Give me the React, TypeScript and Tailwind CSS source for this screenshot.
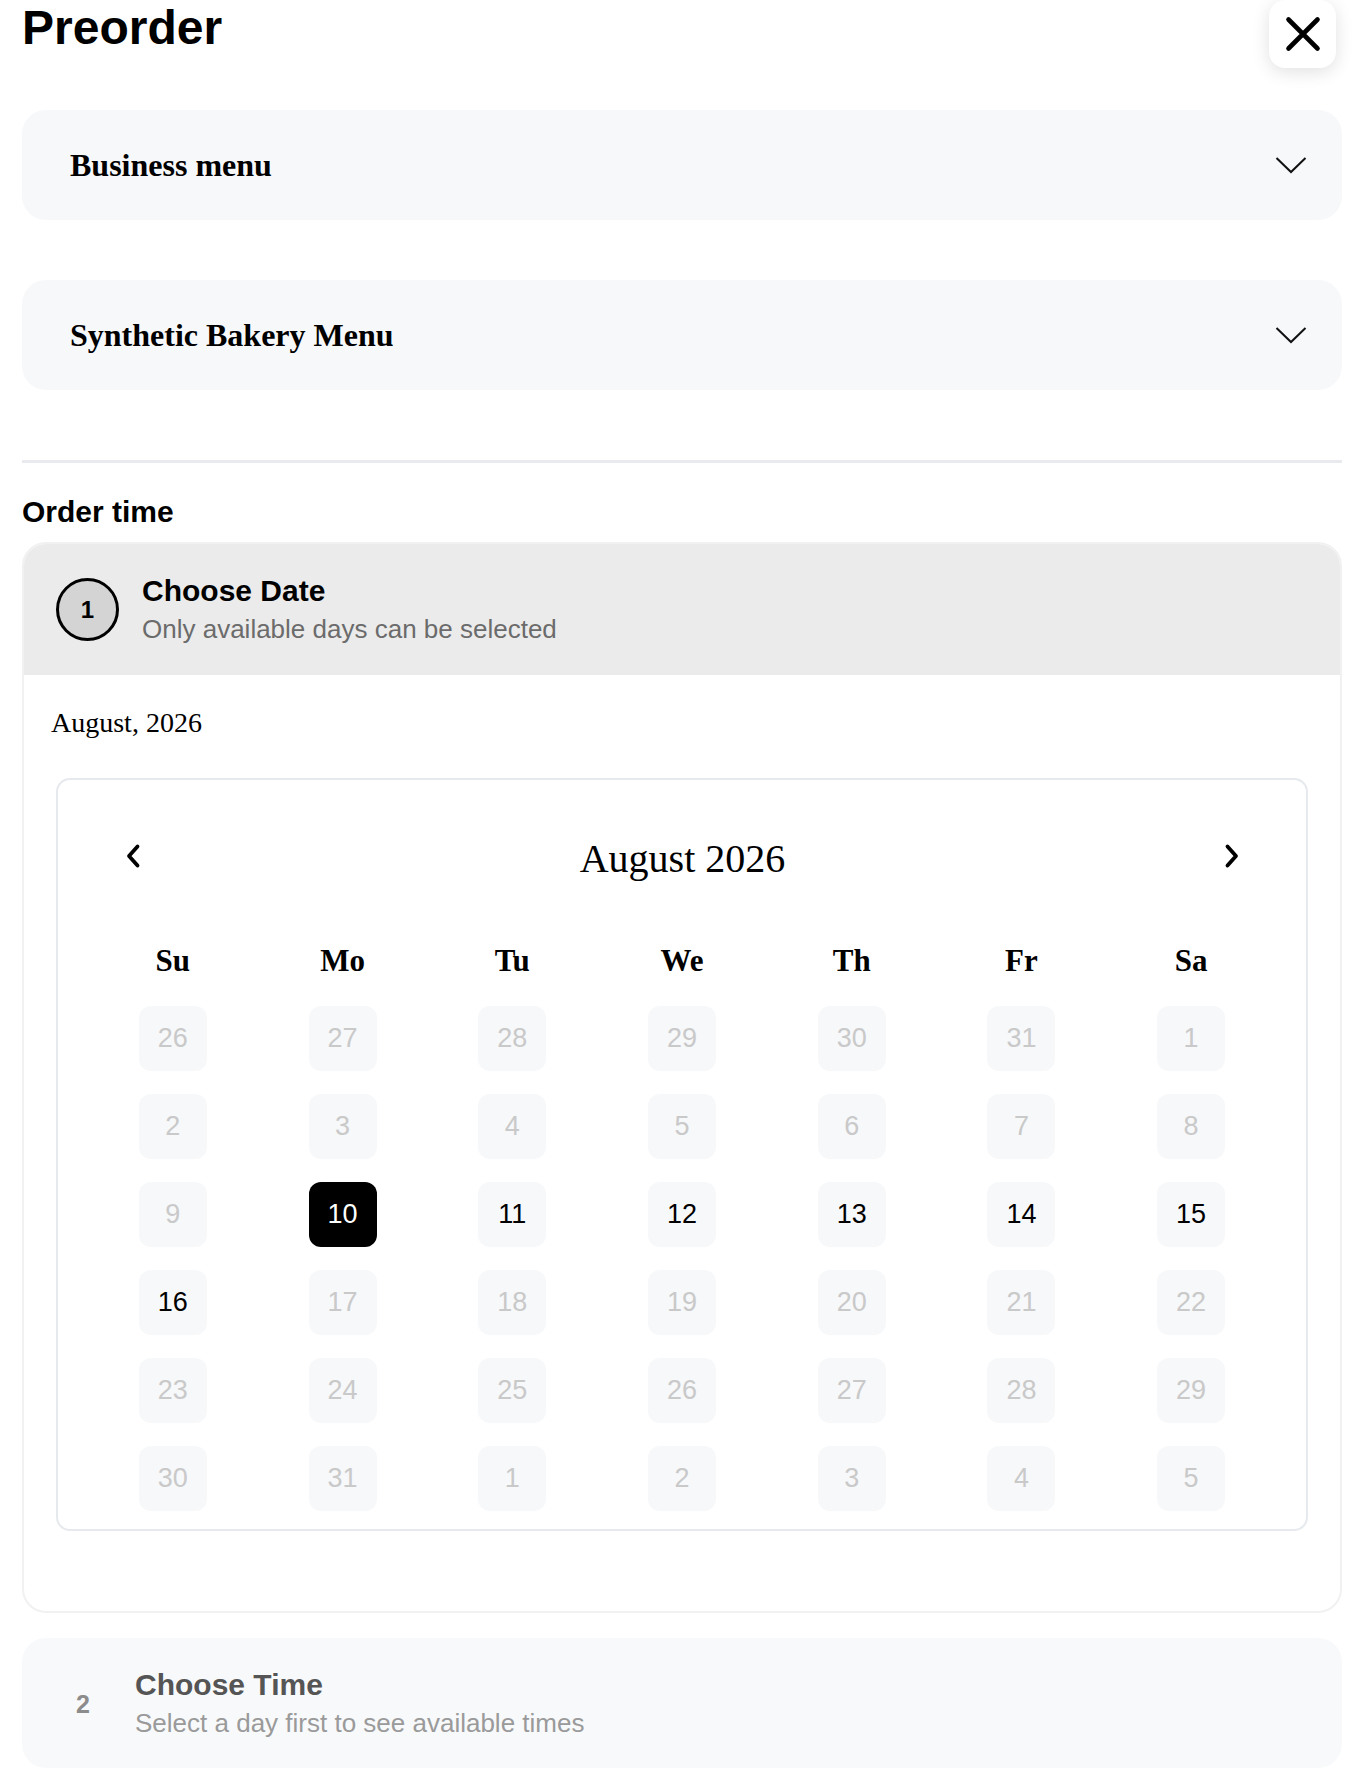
import React from "react";

const SANS = "font-['Liberation_Sans',Arial,sans-serif]";
const SERIF = "font-['Liberation_Serif','Times_New_Roman',serif]";

type Day = { n: number; state: "off" | "on" | "sel" };

const WEEKDAYS = ["Su", "Mo", "Tu", "We", "Th", "Fr", "Sa"];

function buildDays(): Day[] {
  const nums = [
    26, 27, 28, 29, 30, 31, 1,
    2, 3, 4, 5, 6, 7, 8,
    9, 10, 11, 12, 13, 14, 15,
    16, 17, 18, 19, 20, 21, 22,
    23, 24, 25, 26, 27, 28, 29,
    30, 31, 1, 2, 3, 4, 5,
  ];
  return nums.map((n, i) => {
    // 10th is picked, 11th..16th still open, the rest is closed
    if (i === 15) return { n, state: "sel" };
    if (i >= 16 && i <= 21) return { n, state: "on" };
    return { n, state: "off" };
  });
}

function Chevron() {
  return (
    <svg width="32" height="18" viewBox="0 0 32 18" fill="none">
      <path d="M1.5 2 L16 16 L30.5 2" stroke="#111" strokeWidth="2" strokeLinejoin="miter" />
    </svg>
  );
}

function MenuRow({ label }: { label: string }) {
  return (
    <div className="flex h-[110px] items-center justify-between rounded-[24px] bg-[#f7f8fa] pl-12 pr-[35px]">
      <span className={`${SERIF} text-[32px] font-bold text-black`}>{label}</span>
      <Chevron />
    </div>
  );
}

function NavArrow({ dir }: { dir: "left" | "right" }) {
  return (
    <svg width="24" height="26" viewBox="0 0 24 26" fill="none">
      {dir === "left" ? (
        <path d="M16.5 3.5 L8 13 L16.5 22.5" stroke="#000" strokeWidth="3.8" strokeLinecap="round" strokeLinejoin="round" />
      ) : (
        <path d="M7.5 3.5 L16 13 L7.5 22.5" stroke="#000" strokeWidth="3.8" strokeLinecap="round" strokeLinejoin="round" />
      )}
    </svg>
  );
}

function Calendar() {
  const days = buildDays();
  return (
    <div className="ml-[32px] mr-[32px] rounded-[14px] border-2 border-[#e6e9ed] px-[30px] pb-[18px] pt-[46px]">
      <div className="flex h-[60px] items-center justify-between pl-[33px] pr-[32px]">
        <NavArrow dir="left" />
        <span className={`${SERIF} pt-[6px] text-[40px] text-black`}>August 2026</span>
        <NavArrow dir="right" />
      </div>
      <div className="mt-[52px] grid h-[46px] grid-cols-7 items-center">
        {WEEKDAYS.map((w) => (
          <span key={w} className={`${SERIF} text-center text-[31px] font-bold text-black`}>
            {w}
          </span>
        ))}
      </div>
      <div className="mt-[22px] grid grid-cols-7 gap-y-[23px]">
        {days.map((d, i) => (
          <div key={i} className="flex justify-center">
            <div
              className={`${SANS} flex h-[65px] w-[68px] items-center justify-center rounded-[12px] text-[27px] ${
                d.state === "sel"
                  ? "bg-black text-white"
                  : d.state === "on"
                  ? "bg-[#f7f8fa] text-black"
                  : "bg-[#f7f8fa] text-[#c9c9c9]"
              }`}
            >
              {d.n}
            </div>
          </div>
        ))}
      </div>
    </div>
  );
}

export default function App() {
  return (
    <div className={`${SANS} min-h-[1772px] bg-white pb-[10px] pl-[22px] pr-[20px] text-black`}>
      {/* header */}
      <div className="flex h-[68px] items-start justify-between">
        <h1 className="pt-[4px] text-[48px] font-bold leading-none">Preorder</h1>
        <button
          type="button"
          className="mr-[6px] flex h-[68px] w-[67px] items-center justify-center rounded-[16px] bg-white shadow-[0_4px_18px_rgba(0,0,0,0.12)]"
        >
          <svg width="36" height="36" viewBox="0 0 36 36" fill="none">
            <path d="M3.5 3.5 L32.5 32.5 M32.5 3.5 L3.5 32.5" stroke="#000" strokeWidth="4.6" strokeLinecap="round" />
          </svg>
        </button>
      </div>

      <div className="mt-[42px]">
        <MenuRow label="Business menu" />
      </div>
      <div className="mt-[60px]">
        <MenuRow label="Synthetic Bakery Menu" />
      </div>

      <div className="mt-[70px] h-[3px] bg-[#e8eaed]" />

      <h2 className="mt-[34px] text-[30px] font-bold leading-none">Order time</h2>

      {/* step 1 */}
      <div className="mt-[15px] overflow-hidden rounded-[24px] border-2 border-[#f1f1f1]">
        <div className="flex h-[131px] items-center bg-[#ebebeb] pl-[32px]">
          <div className="flex h-[63px] w-[63px] items-center justify-center rounded-full border-[3px] border-black bg-[#d4d4d4] text-[24px] font-bold">
            1
          </div>
          <div className="ml-[23px] mt-[5px] flex flex-col">
            <span className="text-[30px] font-bold leading-[34px] text-black">Choose Date</span>
            <span className="text-[26px] leading-[42px] text-[#6b6b6b]">Only available days can be selected</span>
          </div>
        </div>
        <div className="pb-[80px]">
          <p className={`${SERIF} mt-[34px] pl-[27px] text-[28px] leading-none text-black`}>August, 2026</p>
          <div className="mt-[41px]">
            <Calendar />
          </div>
        </div>
      </div>

      {/* step 2 */}
      <div className="mt-[25px] flex h-[130px] items-center rounded-[24px] bg-[#f8f9fa] pl-[54px]">
        <span className="mt-[4px] w-[15px] text-[25px] font-bold text-[#8c8c8c]">2</span>
        <div className="ml-[44px] mt-[6px] flex flex-col">
          <span className="text-[30px] font-bold leading-[34px] text-[#555555]">Choose Time</span>
          <span className="text-[26px] leading-[42px] text-[#9a9a9a]">Select a day first to see available times</span>
        </div>
      </div>
    </div>
  );
}
